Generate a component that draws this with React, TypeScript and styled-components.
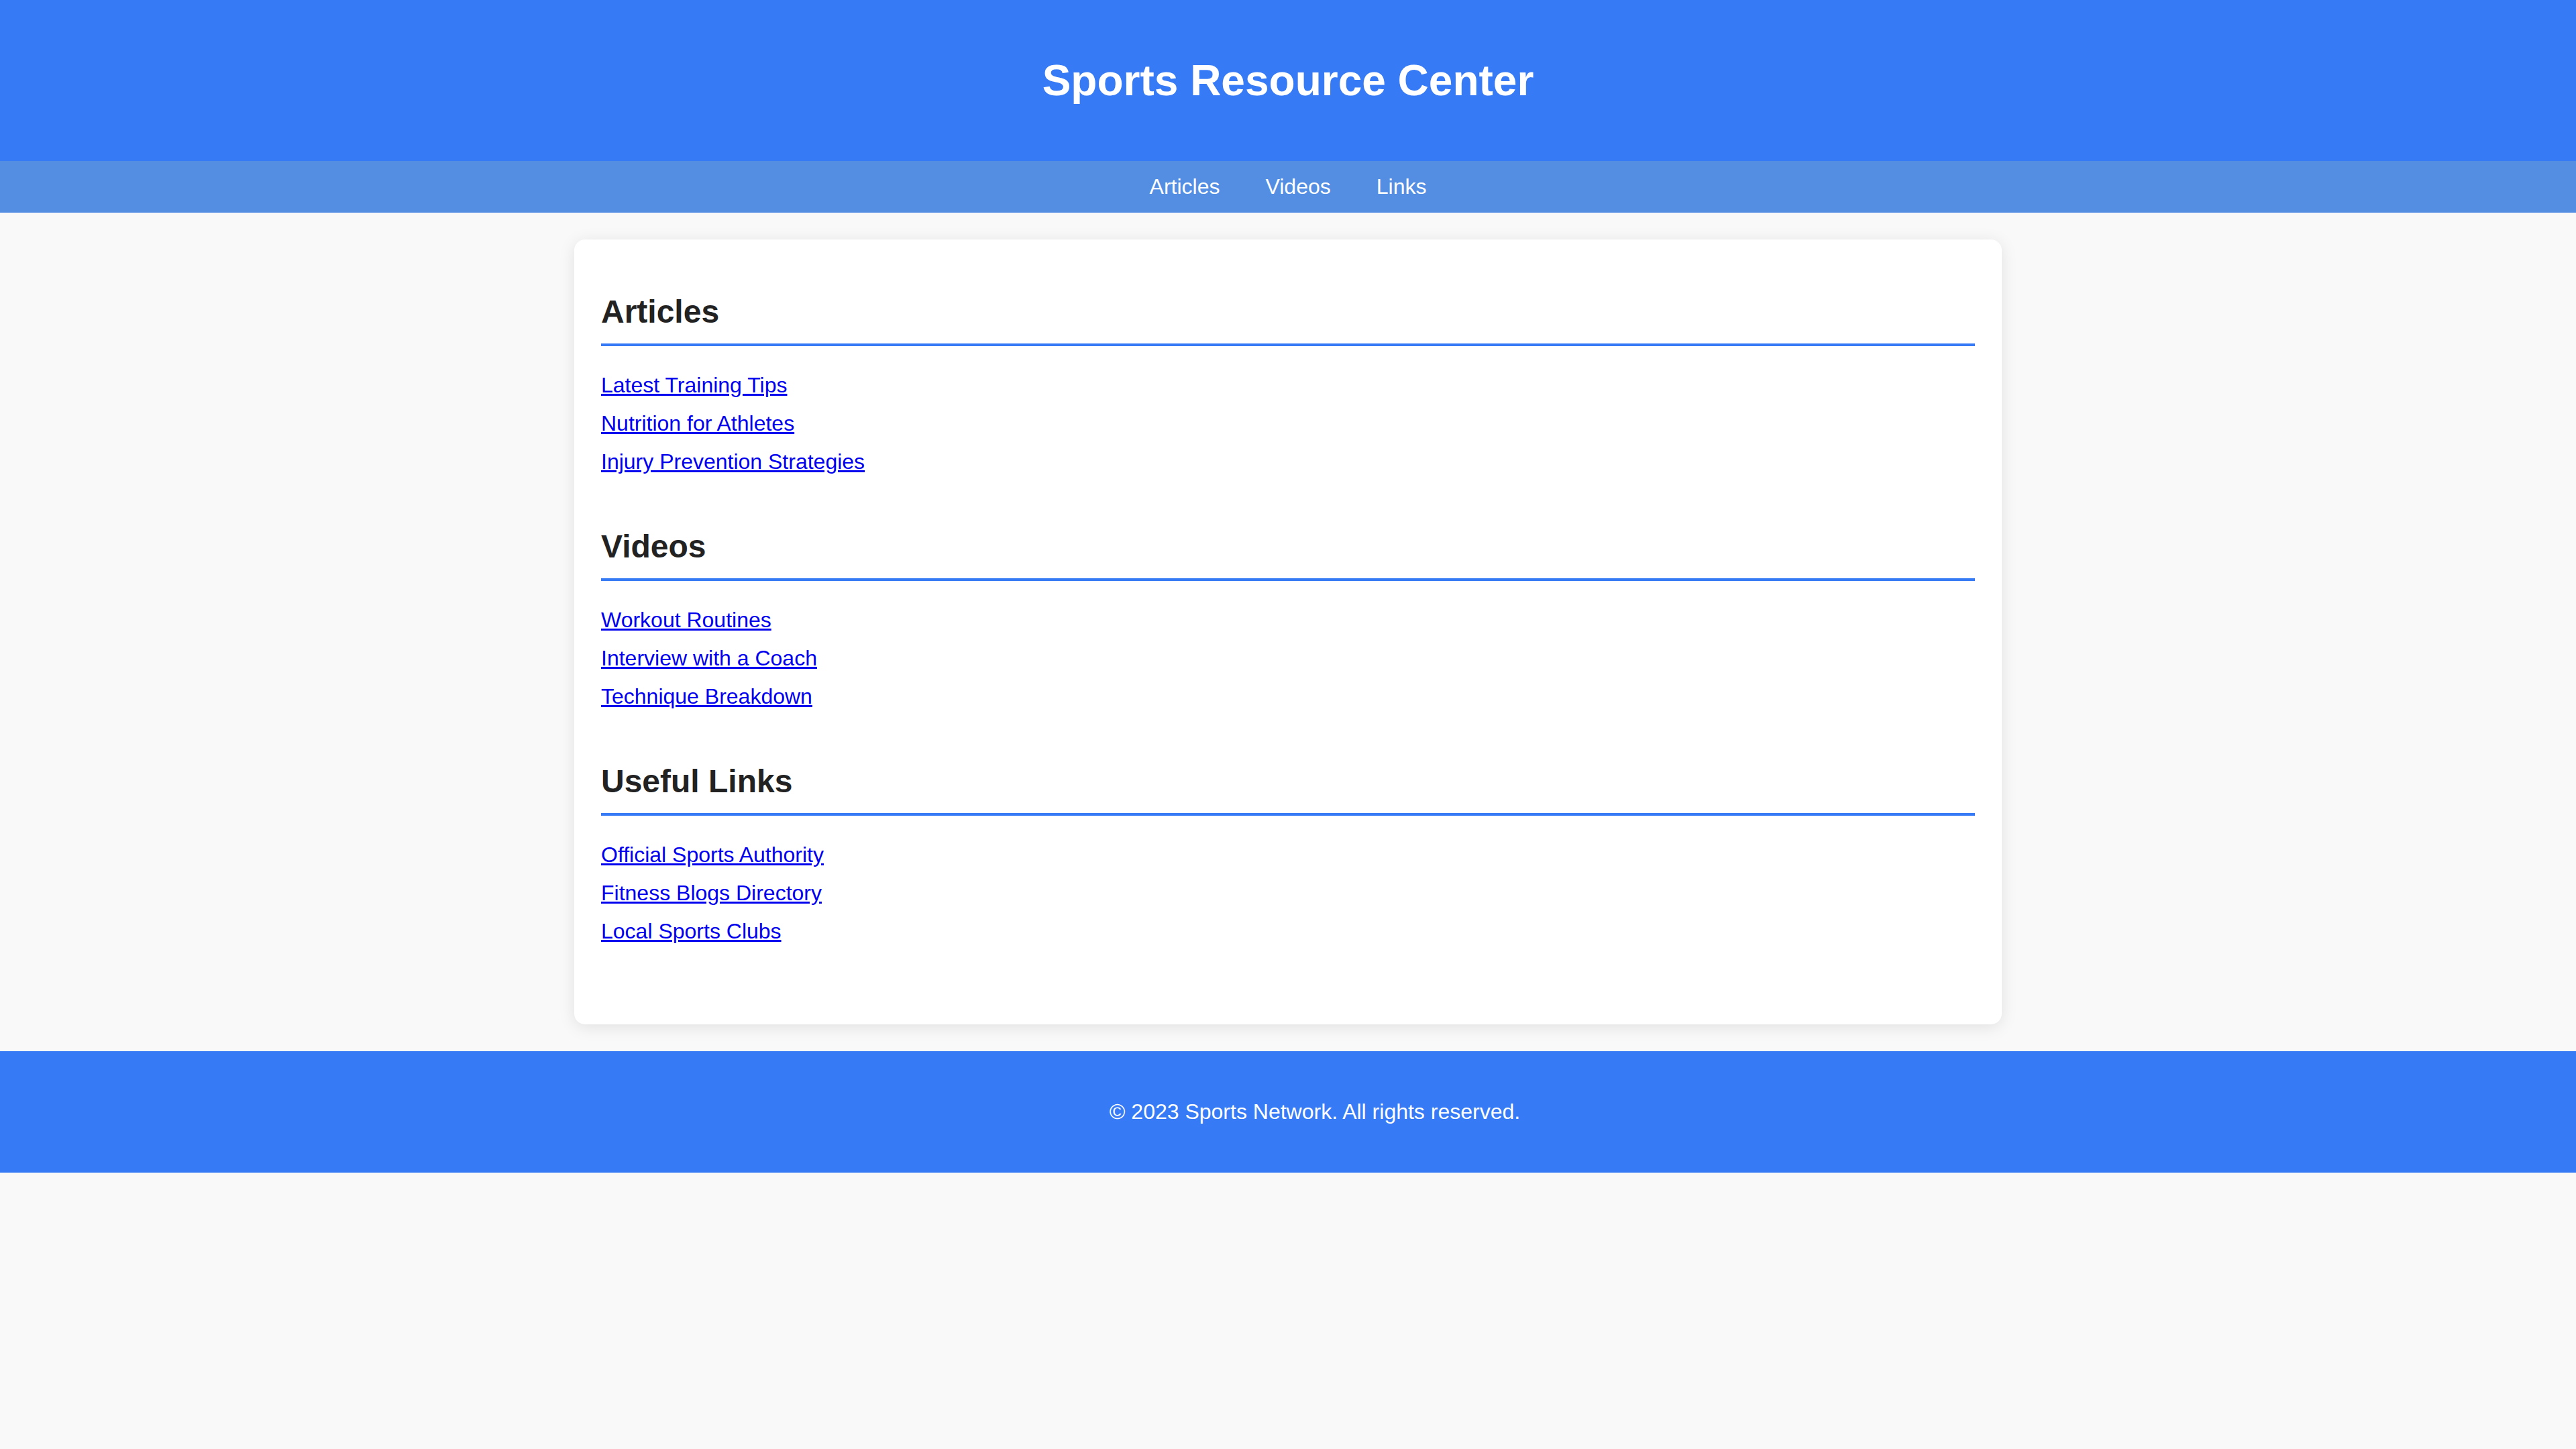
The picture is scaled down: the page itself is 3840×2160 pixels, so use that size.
import React from 'react';
import styled, { createGlobalStyle } from 'styled-components';

const sections = [
  {
    title: 'Articles',
    links: ['Latest Training Tips', 'Nutrition for Athletes', 'Injury Prevention Strategies'],
  },
  {
    title: 'Videos',
    links: ['Workout Routines', 'Interview with a Coach', 'Technique Breakdown'],
  },
  {
    title: 'Useful Links',
    links: ['Official Sports Authority', 'Fitness Blogs Directory', 'Local Sports Clubs'],
  },
];

const navItems = ['Articles', 'Videos', 'Links'];

function App() {
  return (
    <>
      <GlobalStyle />
      <Header>
        <Title>Sports Resource Center</Title>
      </Header>
      <Nav>
        {navItems.map((item) => (
          <NavLink key={item} href="#">
            {item}
          </NavLink>
        ))}
      </Nav>
      <Main>
        <Card>
          {sections.map((section) => (
            <Section key={section.title}>
              <SectionTitle>{section.title}</SectionTitle>
              <LinkList>
                {section.links.map((link) => (
                  <LinkItem key={link}>
                    <ResourceLink href="#">{link}</ResourceLink>
                  </LinkItem>
                ))}
              </LinkList>
            </Section>
          ))}
        </Card>
      </Main>
      <Footer>
        <p>© 2023 Sports Network. All rights reserved.</p>
      </Footer>
    </>
  );
}

const GlobalStyle = createGlobalStyle`
  html, body {
    margin: 0;
    padding: 0;
    background: #f9f9f9;
  }
  body {
    font-family: "Liberation Sans", Arial, sans-serif;
    font-size: 32px;
  }
`;

const Header = styled.header`
  background: #367bf5;
  color: #fff;
  padding: 40px;
  text-align: center;
`;

const Title = styled.h1`
  margin: 0.67em 0;
  font-size: 64px;
  font-weight: bold;
`;

const Nav = styled.nav`
  display: flex;
  justify-content: center;
  gap: 68px;
  padding: 20px;
  background: #538ee3;
`;

const NavLink = styled.a`
  color: #fff;
  text-decoration: none;
  font-size: 32px;
`;

const Main = styled.main`
  padding: 40px 0;
`;

const Card = styled.div`
  box-sizing: border-box;
  width: 2128px;
  margin: 0 auto;
  padding: 40px 40px 80px;
  background: #fff;
  border-radius: 16px;
  box-shadow: 0 4px 24px rgba(0, 0, 0, 0.1);
`;

const Section = styled.section`
  display: flow-root;
  margin-bottom: 40px;
`;

const SectionTitle = styled.h2`
  margin: 40px 0;
  padding-bottom: 20px;
  border-bottom: 4px solid #367bf5;
  font-size: 48px;
  color: #222;
`;

const LinkList = styled.ul`
  list-style: none;
  margin: 0;
  padding: 0;
`;

const LinkItem = styled.li`
  & + & {
    margin-top: 20px;
  }
`;

const ResourceLink = styled.a`
  color: #0000ee;
  text-decoration: underline;
`;

const Footer = styled.footer`
  background: #367bf5;
  color: #fff;
  text-align: center;
  /* text sits a little right of centre in the reference */
  padding: 40px 0 40px 80px;

  p {
    margin: 32px 0;
  }
`;

export default App;
